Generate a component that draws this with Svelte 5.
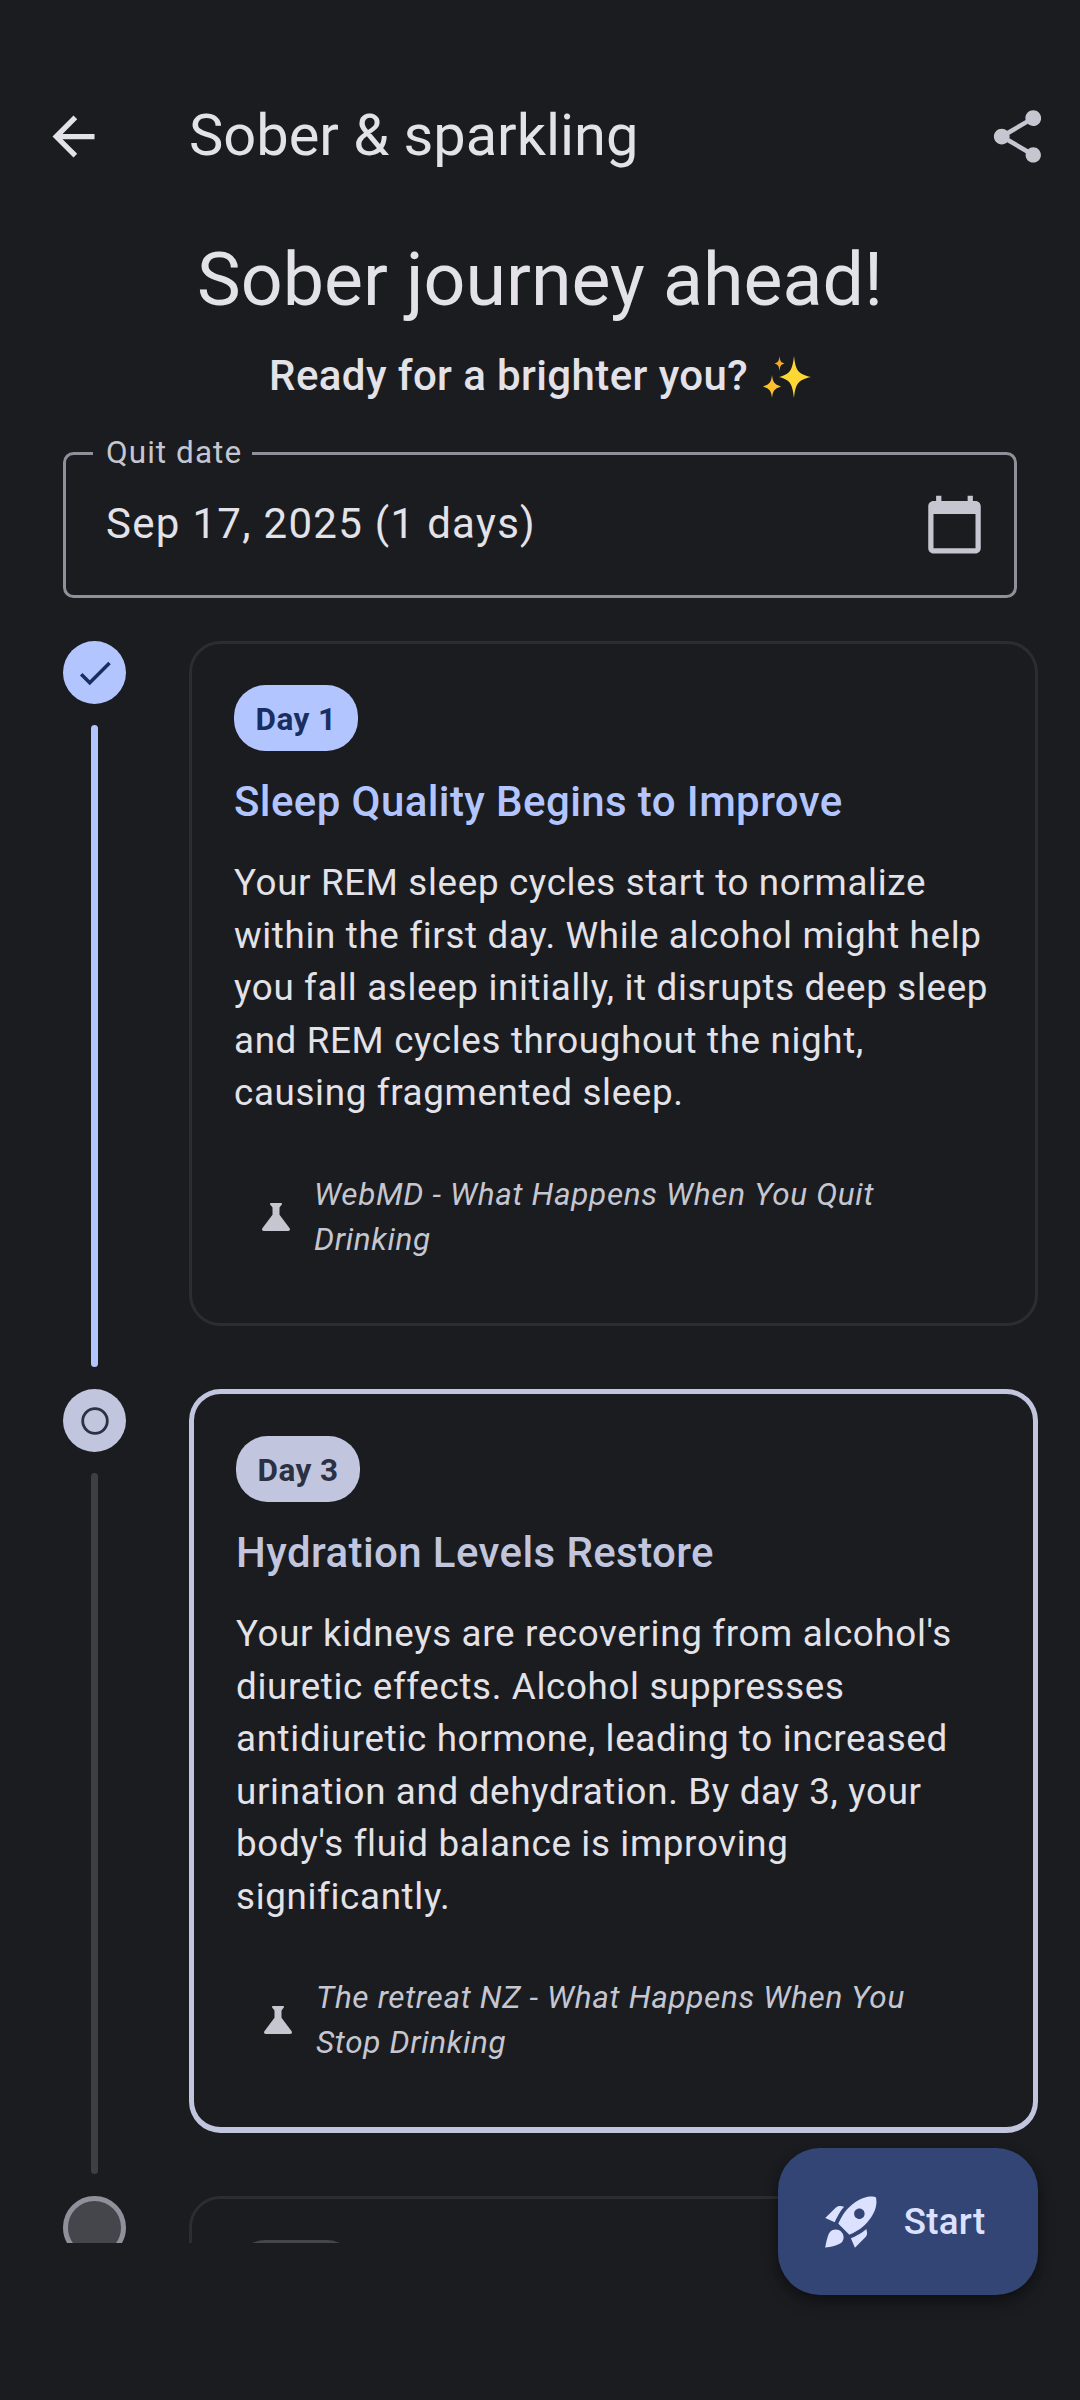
<script>
  const steps = [
    {
      day: "Day 1",
      title: "Sleep Quality Begins to Improve",
      body: "Your REM sleep cycles start to normalize within the first day. While alcohol might help you fall asleep initially, it disrupts deep sleep and REM cycles throughout the night, causing fragmented sleep.",
      source: "WebMD - What Happens When You Quit Drinking",
      state: "done"
    },
    {
      day: "Day 3",
      title: "Hydration Levels Restore",
      body: "Your kidneys are recovering from alcohol's diuretic effects. Alcohol suppresses antidiuretic hormone, leading to increased urination and dehydration. By day 3, your body's fluid balance is improving significantly.",
      source: "The retreat NZ - What Happens When You Stop Drinking",
      state: "current"
    }
  ];
</script>

<div class="screen">
  <header class="topbar">
    <button class="icon-btn" aria-label="Back">
      <svg viewBox="0 0 24 24" class="icon"><path d="M20,11H7.83l5.59,-5.59L12,4l-8,8 8,8 1.41,-1.41L7.83,13H20v-2z" /></svg>
    </button>
    <h1 class="bar-title">Sober &amp; sparkling</h1>
    <button class="icon-btn share" aria-label="Share">
      <svg viewBox="0 0 24 24" class="icon"><path d="M18,16.08c-0.76,0 -1.44,0.3 -1.96,0.77L8.91,12.7c0.05,-0.23 0.09,-0.46 0.09,-0.7s-0.04,-0.47 -0.09,-0.7l7.05,-4.11c0.54,0.5 1.25,0.81 2.04,0.81 1.66,0 3,-1.34 3,-3s-1.34,-3 -3,-3 -3,1.34 -3,3c0,0.24 0.04,0.47 0.09,0.7L8.04,9.81C7.5,9.31 6.79,9 6,9c-1.66,0 -3,1.34 -3,3s1.34,3 3,3c0.79,0 1.5,-0.31 2.04,-0.81l7.12,4.16c-0.05,0.21 -0.08,0.43 -0.08,0.65 0,1.61 1.31,2.92 2.92,2.92 1.61,0 2.92,-1.31 2.92,-2.92s-1.31,-2.92 -2.92,-2.92z" /></svg>
    </button>
  </header>

  <h2 class="headline">Sober journey ahead!</h2>
  <p class="subtitle">
    Ready for a brighter you?
    <svg class="sparkles" viewBox="0 0 48 42" role="img" aria-label="✨">
      <path d="M31 0c1.500 13 3 18 17 21-14 3-15.500 8-17 21-1.500-13-3-18-15-21 12-3 13.500-8 15-21z" fill="#fdd835" />
      <path d="M16.500 0c.6 5 1.200 6.500 5 7.500-3.800 1-4.400 2.500-5 7.500-.6-5-1.200-6.500-5-7.500 3.800-1 4.400-2.500 5-7.500z" fill="#f9a825" />
      <path d="M9 19c.9 7 1.800 9 9 11.500-7.200 2.500-8.100 4.500-9 11.500-.9-7-1.800-9-9-11.500 7.200-2.500 8.100-4.500 9-11.500z" fill="#fbc02d" />
    </svg>
  </p>

  <div class="field">
    <span class="field-label">Quit date</span>
    <span class="field-value">Sep 17, 2025 (1 days)</span>
    <svg viewBox="0 0 24 24" class="icon cal"><path d="M20,3h-1V1h-2v2H7V1H5v2H4c-1.100,0 -2,0.900 -2,2v16c0,1.100 0.900,2 2,2h16c1.100,0 2,-0.900 2,-2V5c0,-1.100 -0.900,-2 -2,-2zM20,21H4V8h16v13z" /></svg>
  </div>

  <div class="timeline">
    {#each steps as s}
      <div class="row {s.state}">
        <div class="rail">
          <div class="dot">
            {#if s.state === "done"}
              <svg viewBox="0 0 24 24" class="dot-icon"><path d="M9,16.170L4.830,12l-1.420,1.410L9,19 21,7l-1.410,-1.410z" /></svg>
            {:else}
              <svg viewBox="0 0 42 42" class="dot-icon"><circle cx="21" cy="21" r="12.300" fill="none" stroke="currentColor" stroke-width="2.800" /></svg>
            {/if}
          </div>
          <div class="line"></div>
        </div>
        <article class="card">
          <span class="pill">{s.day}</span>
          <h3 class="card-title">{s.title}</h3>
          <p class="card-body">{s.body}</p>
          <div class="source">
            <svg viewBox="0 0 24 24" class="flask"><path d="M19.800,18.400L14,10.670V6.500l1.350,-1.690C15.610,4.480 15.380,4 14.960,4H9.040C8.620,4 8.390,4.480 8.650,4.810L10,6.500v4.170L4.200,18.400C3.710,19.060 4.180,20 5,20h14C19.820,20 20.290,19.060 19.800,18.400z" /></svg>
            <span>{s.source}</span>
          </div>
        </article>
      </div>
    {/each}
    <div class="row upcoming">
      <div class="rail"><div class="dot"></div></div>
      <article class="card"><span class="pill"></span></article>
    </div>
  </div>

  <button class="fab">
    <svg viewBox="0 0 24 24" class="icon"><path d="M9.190,6.350c-2.040,2.290 -3.440,5.580 -3.570,5.890L2,10.690l4.050,-4.050c0.470,-0.470 1.150,-0.680 1.810,-0.550L9.190,6.350L9.190,6.350zM11.170,17c0,0 3.740,-1.550 5.890,-3.700c5.400,-5.400 4.500,-9.620 4.210,-10.570c-0.950,-0.300 -5.170,-1.190 -10.570,4.210C8.550,9.090 7,12.830 7,12.830L11.170,17zM17.650,14.810c-2.290,2.040 -5.580,3.440 -5.890,3.570L13.310,22l4.050,-4.050c0.470,-0.470 0.680,-1.150 0.550,-1.810L17.650,14.810L17.650,14.810zM9,18c0,0.830 -0.340,1.580 -0.880,2.120C6.940,21.300 2,22 2,22s0.700,-4.940 1.880,-6.120C4.420,15.340 5.170,15 6,15C7.660,15 9,16.340 9,18zM13,9c0,-1.100 0.900,-2 2,-2s2,0.900 2,2s-0.900,2 -2,2S13,10.100 13,9z" /></svg>
    <span>Start</span>
  </button>
</div>

<style>
  :global(body) {
    background: #1a1c20;
  }

  .screen {
    position: relative;
    height: 2400px;
    padding: 52px 0 157px;
    box-sizing: border-box;
    display: flex;
    flex-direction: column;
    overflow: hidden;
    background: #1a1c20;
    color: #e3e2e9;
    font-family: Roboto, sans-serif;
  }

  .topbar {
    height: 168px;
    flex: none;
    display: flex;
    align-items: center;
    padding: 0 31.500px 0 42px;
  }

  .icon-btn {
    width: 63px;
    height: 63px;
    padding: 0;
    background: none;
    border: none;
    color: #e3e2e9;
  }

  .icon {
    display: block;
    width: 63px;
    height: 63px;
    fill: currentColor;
  }

  .share {
    color: #c5c6d0;
    margin-left: auto;
  }

  .bar-title {
    margin: -2px 0 0 84px;
    font-size: 57.750px;
    font-weight: 400;
    line-height: 74px;
  }

  .headline {
    margin: 8px 0 0;
    text-align: center;
    font-size: 73.500px;
    font-weight: 400;
    line-height: 105px;
  }

  .subtitle {
    margin: 11px 0 0;
    text-align: center;
    font-size: 42px;
    font-weight: 500;
    line-height: 63px;
    letter-spacing: 0.390px;
  }

  .sparkles {
    width: 48px;
    height: 42px;
    margin-left: 4px;
    vertical-align: -8px;
  }

  .field {
    position: relative;
    flex: none;
    margin: 45px 63px 0;
    height: 146px;
    box-sizing: border-box;
    border: 3px solid #8f9099;
    border-radius: 10.500px;
    display: flex;
    align-items: center;
    padding-left: 40px;
    padding-right: 28px;
  }

  .field-label {
    position: absolute;
    left: 27px;
    top: -18px;
    padding: 0 10px 0 13px;
    background: #1a1c20;
    color: #c5c6d0;
    font-size: 31.500px;
    line-height: 32px;
    letter-spacing: 1.050px;
  }

  .field-value {
    font-size: 42px;
    letter-spacing: 1.300px;
    margin-top: -3px;
  }

  .cal {
    margin-left: auto;
    color: #c5c6d0;
    margin-top: -2px;
  }

  .timeline {
    flex: 1;
    min-height: 0;
    overflow: hidden;
    margin-top: 43px;
    padding: 0 42px 0 63px;
  }

  .row {
    display: flex;
    gap: 63px;
    padding-bottom: 63px;
  }

  .rail {
    flex: none;
    width: 63px;
    display: flex;
    flex-direction: column;
    align-items: center;
    margin-bottom: -41px;
  }

  .dot {
    flex: none;
    width: 63px;
    height: 63px;
    box-sizing: border-box;
    border-radius: 50%;
    display: flex;
    align-items: center;
    justify-content: center;
  }

  .dot-icon {
    width: 42px;
    height: 42px;
    fill: currentColor;
  }

  .line {
    flex: 1;
    width: 7px;
    margin-top: 21px;
    border-radius: 3.500px;
  }

  .card {
    flex: 1;
    min-width: 0;
    border-radius: 31.500px;
    padding: 41px 42px 42px;
    border: 3px solid #2b2d31;
  }

  .pill {
    display: inline-block;
    height: 66px;
    min-width: 124px;
    box-sizing: border-box;
    padding: 0 21px;
    border-radius: 31.500px;
    font-size: 31.500px;
    font-weight: 700;
    line-height: 70px;
    letter-spacing: 0.400px;
    vertical-align: top;
    text-align: center;
  }

  .card-title {
    margin: 19px 0 0;
    font-size: 42px;
    font-weight: 500;
    line-height: 63px;
    letter-spacing: 0.400px;
  }

  .card-body {
    margin: 24px 0 0;
    font-size: 36.750px;
    line-height: 52.500px;
    letter-spacing: 0.660px;
  }

  .source {
    display: flex;
    align-items: center;
    margin-top: 34px;
    padding: 18px 21px 19.500px;
    font-size: 31.500px;
    font-style: italic;
    line-height: 45px;
    letter-spacing: 0.660px;
    color: #c5c6d0;
    gap: 17px;
  }

  .flask {
    flex: none;
    width: 42px;
    height: 42px;
    fill: currentColor;
  }

  .done .dot,
  .done .pill {
    background: #b3c5ff;
    color: #182e60;
  }

  .done .line {
    background: #b3c5ff;
  }

  .done .card-title {
    color: #b3c5ff;
  }

  .current .dot,
  .current .pill {
    background: #c1c5dd;
    color: #2b3042;
  }

  .current .line {
    background: #3e3f44;
  }

  .current .card {
    border-style: solid;
    border-color: #c1c5dd;
    border-width: 5px 5px 6px;
    padding-top: 42px;
  }

  .current .card-title {
    color: #c1c5dd;
  }

  .upcoming .dot {
    background: #45464c;
    border: 5px solid #8f9099;
  }

  .upcoming .pill {
    background: #45464c;
  }

  .fab {
    position: absolute;
    right: 42px;
    top: 2148px;
    height: 147px;
    display: flex;
    align-items: center;
    gap: 21px;
    padding: 0 52.500px 0 42px;
    border: none;
    border-radius: 42px;
    background: #324574;
    color: #dbe1ff;
    font-family: inherit;
    font-size: 36.750px;
    font-weight: 500;
    letter-spacing: 0.260px;
    box-shadow: 0 8px 16px rgba(0, 0, 0, 0.3), 0 3px 8px rgba(0, 0, 0, 0.2);
  }
</style>
